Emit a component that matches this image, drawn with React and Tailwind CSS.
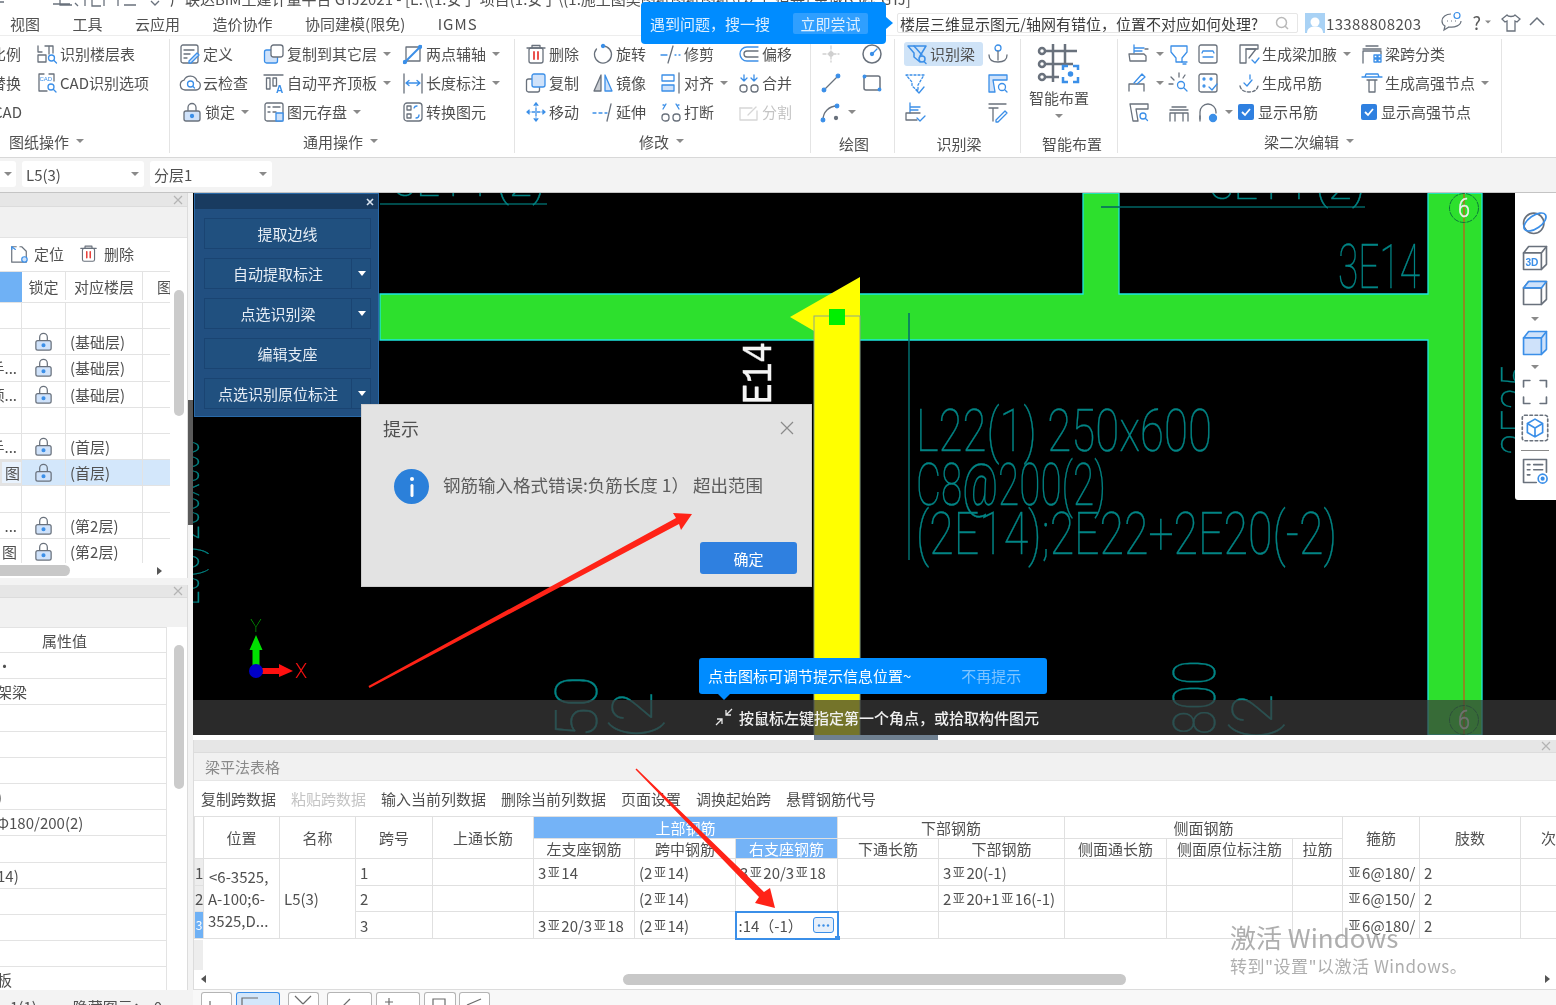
import React from 'react';

const G = '#69717c';
const B = '#3b8fe8';
const L = '#cfe2fa';

const ICONS = {
  layerTable: <><path d="M2 3v6h4M9 3h8v7M2 12h8v7H2zM13 3v8" /><circle cx="15.5" cy="15" r="3" stroke={B} /><path d="M18 17.5l2.5 2.5" stroke={B} /></>,
  cadOpt: <><path d="M8 2H3v17h8" /><path d="M13 2h5v7" /><text x="3.5" y="9" fontSize="6" fill={B} stroke="none" fontFamily="Liberation Sans">CAD</text><circle cx="15" cy="15" r="3" stroke={B} /><path d="M17.5 17.5l2.5 2.5" stroke={B} /></>,
  define: <><rect x="2" y="2" width="17" height="18" rx="2" /><path d="M5 7h10M5 11h6M5 15h3" /><path d="M10 18l8-8 2 2-8 8h-2z" stroke={B} fill={L} /></>,
  copyLayer: <><rect x="1.5" y="7" width="13" height="13" rx="2" stroke={B} fill={L} /><rect x="8" y="2" width="12" height="12" rx="2.5" fill="#fff" /></>,
  axis2: <><path d="M4 4h14v14H4z" /><path d="M2 20L19 3" stroke={B} strokeWidth="2" /><circle cx="3" cy="19" r="1.5" fill={B} stroke={B} /><circle cx="18" cy="4" r="1.5" fill={B} stroke={B} /></>,
  cloud: <><path d="M6 18a5 5 0 01-1-9.8A7 7 0 0118 9a4.6 4.6 0 01-1 9z" /><circle cx="11.5" cy="12" r="3" stroke={B} /><path d="M14 14.500l1.500 1.500" stroke={B} /></>,
  flatTop: <><path d="M1 3h19" /><rect x="3.500" y="6" width="3.500" height="11" /><rect x="10" y="6" width="3.500" height="8" /><text x="13" y="21" fontSize="10" fontWeight="700" fill={B} stroke="none" fontFamily="Liberation Sans">A</text></>,
  dim: <><path d="M2 2v19M20 2v19" /><path d="M4 11h14M4 11l3-2.500M4 11l3 2.500M18 11l-3-2.500M18 11l-3 2.500" stroke={B} /></>,
  lock: <><path d="M7 10V6.500a4 4 0 018 0V10" /><rect x="3" y="10" width="16" height="10" rx="2" fill={L} /><circle cx="11" cy="15" r="1.500" fill={B} stroke={B} /></>,
  save: <><rect x="2" y="2" width="18" height="18" rx="2" /><path d="M5 6h2M10 6h7M5 11h2M10 11h3" /><rect x="13" y="12" width="7" height="8" stroke={B} fill={L} /></>,
  convert: <><rect x="2" y="2" width="18" height="18" rx="3" /><rect x="5" y="5" width="4" height="4" /><rect x="5" y="13" width="4" height="4" /><path d="M12 7a3 3 0 013-2M17 14a3 3 0 01-3 3" stroke={B} /></>,
  trash: <><path d="M2 5h18M7 5V2.500h8V5" /><rect x="4" y="5" width="14" height="15" rx="2" /><path d="M9 9v7M13 9v7" stroke="#e8413c" strokeWidth="1.800" /></>,
  rotate: <><path d="M11 3a8.500 8.500 0 11-6.500 3" /><circle cx="11" cy="3" r="1.500" fill={B} stroke={B} /></>,
  trim: <><path d="M1 12h6" stroke={B} /><path d="M13 3L8 20" /><path d="M15 12h1M19 12h1" stroke={B} /></>,
  offset: <><path d="M20 4H9a7 7 0 000 14h11" stroke={B} /><path d="M20 8H9a3 3 0 000 6h11" /></>,
  copy: <><rect x="1.500" y="7" width="13" height="13" rx="2" /><rect x="7" y="2" width="13" height="13" rx="2" stroke={B} fill={L} /></>,
  mirror: <><path d="M9 3L2 19h7z" fill="#c9cdd3" /><path d="M13 3l7 16h-7z" fill={L} stroke={B} /></>,
  alignObj: <><rect x="2" y="3" width="12" height="6" stroke={B} /><rect x="2" y="13" width="12" height="6" stroke={B} fill={L} /><path d="M19 1v20" /></>,
  merge: <><rect x="2" y="13" width="7" height="7" rx="3" /><rect x="13" y="13" width="7" height="7" rx="3" /><path d="M6 3v6M16 3v6M3 6l3 3 3-3M13 6l3 3 3-3" stroke={B} /></>,
  move: <><path d="M11 2v18M2 11h18M11 2L8.500 5M11 2l2.500 3M11 20l-2.500-3M11 20l2.500-3M2 11l3-2.500M2 11l3 2.500M20 11l-3-2.500M20 11l-3 2.500" stroke={B} strokeDasharray="3 2" /></>,
  extend: <><path d="M1 12h3M7 12h3" stroke={B} /><path d="M19 3l-4 17" /><path d="M13 12h2" stroke={B} /></>,
  breakIcon: <><rect x="2" y="13" width="7" height="7" rx="3" /><rect x="13" y="13" width="7" height="7" rx="3" /><path d="M3 8l3-5M19 8l-3-5M3 4h1M19 4h-1" stroke={B} /></>,
  split: <g stroke="#d6d6d6"><path d="M2 7v12h17V10" /><path d="M2 7h12" /><path d="M10 14l8-8" /></g>,
  point: <g stroke="#cfcfcf"><path d="M11 3v16M3 11h16" strokeDasharray="3 2" /><circle cx="11" cy="11" r="2" fill="#cfcfcf" /></g>,
  circle: <><circle cx="11" cy="11" r="9" strokeWidth="1.500" /><circle cx="11" cy="11" r="1.500" fill={B} stroke={B} /><path d="M11 11l5-5" stroke={B} /></>,
  line: <><path d="M4 18L18 4" /><circle cx="4" cy="18" r="1.800" fill={B} stroke={B} /><circle cx="18" cy="4" r="1.800" fill={B} stroke={B} /></>,
  rect: <><rect x="3" y="4" width="16" height="14" rx="2" strokeWidth="1.500" /><circle cx="3.500" cy="4.500" r="1.300" fill={B} stroke={B} /><circle cx="18.500" cy="17.500" r="1.300" fill={B} stroke={B} /></>,
  arc: <><path d="M3 19C3 11 9 5 17 5" /><circle cx="3" cy="19" r="1.800" fill={B} stroke={B} /><circle cx="17" cy="5" r="1.800" fill={B} stroke={B} /><circle cx="16" cy="17" r="1.500" fill={G} /></>,
  beamId: <g stroke={B} strokeWidth="1.500"><path d="M2 3h18L14 13v6L8 14V10z" /><path d="M8 3l8 9" /><circle cx="16" cy="16" r="3" fill="#cfe3f7" /><path d="M18 18.500l2 2" /></g>,
  crown: <><circle cx="11" cy="5" r="3" stroke={B} /><path d="M11 8v9M2 12c0 5 3 7 9 7s9-2 9-7" stroke={G} /></>,
  beamSel: <g stroke={B}><path d="M2 3h18L14 13v6L8 14V10z" strokeDasharray="2 2" /><path d="M12 18l3 3 5-6" stroke={B} /></g>,
  beamFind: <><path d="M2 3h18v5H6l2 12H2z" stroke={B} fill={L} /><circle cx="15" cy="15" r="3.500" stroke={B} fill="#fff" /><path d="M18 18l2 2" stroke={B} /></>,
  stepCheck: <><path d="M6 2v10M6 6h10M6 9h8" stroke={B} /><path d="M2 12h14M2 12v7h11" /><path d="M13 17l3 3 5-5" stroke={B} /></>,
  tPen: <><path d="M2 3h17M2 7h9M6 7v13" /><path d="M9 19l9-9 2 2-9 9H9z" stroke={B} /></>,
  ring: <><circle cx="10" cy="12" r="8" stroke={G} /><ellipse cx="11" cy="11" rx="10" ry="5" transform="rotate(-35 11 11)" stroke={B} strokeWidth="1.300" /></>,
  cube3d: <><path d="M2 7l4-5h14v14l-4 4H2z" /><path d="M2 7h14v13M16 7l4-5" /><text x="3.500" y="17.500" fontSize="8" fontWeight="700" fill={B} stroke="none" fontFamily="Liberation Sans">3D</text></>,
  cube: <><path d="M2 7l4-5h14v14l-4 4H2z" /><path d="M2 7h14v13" /><path d="M2 7l4-5h14l-4 5z" fill={L} stroke={B} /></>,
  cubeBlue: <g stroke={B} strokeWidth="1.300"><path d="M2 7l4-5h14v14l-4 4H2z" fill={L} /><path d="M2 7h14v13M16 7l4-5" /></g>,
  corners: <path d="M2 7V2h5M15 2h5v5M20 15v5h-5M7 20H2v-5" />,
  cubeDash: <><rect x="1" y="1" width="20" height="20" rx="2" strokeDasharray="2 2" /><path d="M11 4l6 3.500v7L11 18l-6-3.500v-7zM5 7.500l6 3.500 6-3.500M11 11v7" stroke={B} /></>,
  listEye: <><path d="M20 12V2H2v18h10" /><path d="M5 6h2M10 6h7M5 10h2M10 10h7M5 14h2" /><circle cx="17" cy="17" r="3.500" stroke={B} /><circle cx="17" cy="17" r="1" fill={B} stroke={B} /></>,
  locate: <><path d="M8 3H3v17h16V8l-5-5h-2" /><path d="M3 3l4 3M3 3v3" stroke={B} /><circle cx="17" cy="17" r="3" fill={L} stroke={B} /></>,
  step: <><path d="M6 2v8M6 5h10M6 8h8" stroke={B} /><path d="M1 11h15l2 2v5H2z" /><path d="M17 6h3" /></>,
  funnelT: <><path d="M3 3h16v6l-5 6v4H8v-4L3 9z" stroke={B} /><path d="M14 19h5M15 21h3" stroke={B} /></>,
  box: <><rect x="2" y="2" width="18" height="18" rx="2" /><path d="M6 8h10l1 2M6 14h10M5 10l1-2" stroke={B} /></>,
  pencilBeam: <><path d="M1 19V12h15M16 12v7" /><path d="M6 11l8-9 3 3-8 7" stroke={B} /></>,
  sparkFind: <><path d="M11 1v4M3 5l3 3M17 3l-2 3M1 12h4" /><circle cx="13" cy="13" r="3.500" stroke={B} /><path d="M16 16l3 3" stroke={B} /></>,
  dots: <><rect x="2" y="2" width="18" height="18" rx="2" /><circle cx="7" cy="7" r="1" stroke={B} /><circle cx="14" cy="7" r="1" stroke={B} /><circle cx="7" cy="14" r="1" stroke={B} /><path d="M12 15l3 3 5-6" stroke={B} /></>,
  funnelFind: <><path d="M2 3h18v5H8l2 12H5z" /><circle cx="15" cy="15" r="3" stroke={B} /><path d="M17.500 17.500l2 2" stroke={B} /></>,
  beamTop: <><path d="M2 20v-8h18v8M7 12v8M15 12v8M4 6h14M2 9h18" /></>,
  arch: <><path d="M3 20v-9a8 8 0 0116 0v1" /><path d="M3 15v3" /><circle cx="16" cy="17" r="3.500" fill={B} stroke={B} /></>,
  haunch: <><path d="M2 2h18v4H8v14H2z" /><path d="M8 6l10 0-7 9" /><path d="M14 17l3 3 4-5" stroke={B} /></>,
  beamSpan: <><path d="M2 20V8h18v3M5 3h12M2 6h18" /><path d="M13 12h3v3h-3zM17 12h3v3h-3zM13 16h3v3h-3zM17 16h3v3h-3z" stroke={B} /></>,
  genHang: <><path d="M2 14c1 4 4 6 9 6s8-2 9-6" strokeDasharray="3 2" /><path d="M6 11l3 3 5-6M12 3v4" stroke={B} /></>,
  genNode: <><path d="M1 5h20M4 5l1-3h12l1 3" stroke={B} /><path d="M6 8h10M8 8v12h6V8" /></>,
};

function Icon({ n, s = 22, className = '' }) {
  return (
    <svg width={s} height={s} viewBox="0 0 22 22" fill="none" stroke={G} strokeWidth="1.300" strokeLinecap="round" strokeLinejoin="round" className={`shrink-0 ${className}`}>
      {ICONS[n]}
    </svg>
  );
}

function Caret({ className = 'ml-[6px]' }) {
  return <span className={`inline-block h-0 w-0 shrink-0 border-x-[4px] border-t-[4px] border-x-transparent border-t-[#8a8a8a] ${className}`} />;
}

function Item({ i, t, c, dim, className = '' }) {
  return (
    <div className={`flex h-[29px] items-center whitespace-nowrap ${className}`}>
      {i && <Icon n={i} />}
      {t && <span className={`ml-[2px] text-[15px] leading-none ${dim ? 'text-[#c4c4c4]' : 'text-[#505050]'}`}>{t}</span>}
      {c && <Caret />}
    </div>
  );
}

function Check({ t }) {
  return (
    <div className="flex h-[29px] items-center whitespace-nowrap">
      <span className="flex h-[16px] w-[16px] items-center justify-center rounded-[2px] bg-[#2f80e0]">
        <svg width="12" height="12" viewBox="0 0 12 12" fill="none" stroke="#fff" strokeWidth="1.800"><path d="M2 6l3 3 5-6" /></svg>
      </span>
      <span className="ml-[4px] text-[15px] leading-none text-[#505050]">{t}</span>
    </div>
  );
}

function GroupLabel({ t, c, className = 'pt-[4px]' }) {
  return (
    <div className={`flex h-[26px] items-center justify-center text-[15px] leading-none text-[#505050] ${className}`}>
      {t}
      {c && <Caret className="ml-[7px]" />}
    </div>
  );
}

function Group({ w, children, label, c, lc, last }) {
  return (
    <div className={`flex h-[114px] shrink-0 flex-col ${last ? '' : 'border-r border-[#e4e4e4]'}`} style={{ width: w }}>
      <div className="h-[87px]">{children}</div>
      {label && <GroupLabel t={label} c={c} className={lc} />}
    </div>
  );
}

function Ribbon() {
  return (
    <div className="flex h-[122px] border-b border-[#d8d8d8] bg-white pt-[3px]">
      <Group w={170} label="图纸操作" c lc="pt-[4px] pr-[76px]">
        <div className="grid grid-cols-[36px_1fr]">
          <div className="flex h-[29px] items-center justify-end overflow-hidden whitespace-nowrap pr-[15px] text-[15px] leading-none text-[#505050]">比例</div>
          <Item i="layerTable" t="识别楼层表" />
          <div className="flex h-[29px] items-center justify-end overflow-hidden whitespace-nowrap pr-[15px] text-[15px] leading-none text-[#505050]">替换</div>
          <Item i="cadOpt" t="CAD识别选项" />
          <div className="flex h-[29px] items-center justify-end overflow-hidden whitespace-nowrap pr-[14px] text-[15px] leading-none text-[#505050]">CAD</div>
        </div>
      </Group>
      <Group w={345} label="通用操作" c lc="pt-[4px] pr-[3px]">
        <div className="grid grid-cols-[84px_139px_1fr] pl-[9px]">
          <Item i="define" t="定义" />
          <Item i="copyLayer" t="复制到其它层" c />
          <Item i="axis2" t="两点辅轴" c />
          <Item i="cloud" t="云检查" />
          <Item i="flatTop" t="自动平齐顶板" c />
          <Item i="dim" t="长度标注" c />
          <Item i="lock" t="锁定" c className="pl-[2px]" />
          <Item i="save" t="图元存盘" c />
          <Item i="convert" t="转换图元" />
        </div>
      </Group>
      <Group w={296} label="修改" c lc="pt-[4px] pr-[2px]">
        <div className="grid grid-cols-[67px_68px_78px_1fr] pl-[10px]">
          <Item i="trash" t="删除" />
          <Item i="rotate" t="旋转" />
          <Item i="trim" t="修剪" />
          <Item i="offset" t="偏移" />
          <Item i="copy" t="复制" />
          <Item i="mirror" t="镜像" />
          <Item i="alignObj" t="对齐" c />
          <Item i="merge" t="合并" />
          <Item i="move" t="移动" />
          <Item i="extend" t="延伸" />
          <Item i="breakIcon" t="打断" />
          <Item i="split" t="分割" dim />
        </div>
      </Group>
      <Group w={84} label="绘图" lc="pt-[8px] pl-[3px]">
        <div className="grid grid-cols-[41px_1fr] pl-[9px]">
          <Item i="point" />
          <Item i="circle" />
          <Item i="line" />
          <Item i="rect" />
          <Item i="arc" c />
        </div>
      </Group>
      <Group w={126} label="识别梁" lc="pt-[8px] pl-[3px]">
        <div className="grid grid-cols-[92px_1fr] pl-[9px]">
          <div className="flex h-[29px] items-center">
            <div className="flex h-[24px] w-[79px] items-center rounded-[3px] bg-[#cfe3f7] pl-[2px]">
              <Icon n="beamId" />
              <span className="ml-[2px] text-[15px] leading-none text-[#505050]">识别梁</span>
            </div>
          </div>
          <Item i="crown" className="-ml-[9px]" />
          <Item i="beamSel" />
          <Item i="beamFind" className="-ml-[9px]" />
          <Item i="stepCheck" />
          <Item i="tPen" className="-ml-[9px]" />
        </div>
      </Group>
      <Group w={97} label="智能布置" lc="pt-[8px] pl-[6px]">
        <div className="flex flex-col items-center pr-[20px]">
          <svg width="44" height="44" viewBox="0 0 44 44" fill="none" stroke={G} strokeWidth="2.500" className="mt-[3px]">
            <circle cx="5" cy="9" r="3" /><circle cx="5" cy="22" r="3" /><circle cx="5" cy="35" r="3" />
            <path d="M8 9h32M8 22h28M8 35h14M16 2v38M28 2v20" />
            <path d="M26 28v-4h5M36 24h5v4M41 35v5h-5M31 40h-5v-5" stroke={B} />
            <circle cx="33.500" cy="32" r="1.500" fill={B} stroke={B} />
          </svg>
          <span className="mt-[4px] text-[15px] leading-none text-[#505050]">智能布置</span>
          <Caret className="mt-[9px]" />
        </div>
      </Group>
      <Group w={384} label="梁二次编辑" c lc="pt-[4px] pl-[1px] pr-[2px]">
        <div className="grid grid-cols-[40px_29px_41px_123px_1fr] pl-[10px]">
          <Item i="step" c />
          <Item i="funnelT" />
          <Item i="box" />
          <Item i="haunch" t="生成梁加腋" c />
          <Item i="beamSpan" t="梁跨分类" />
          <Item i="pencilBeam" c />
          <Item i="sparkFind" />
          <Item i="dots" />
          <Item i="genHang" t="生成吊筋" />
          <Item i="genNode" t="生成高强节点" c />
          <Item i="funnelFind" />
          <Item i="beamTop" />
          <Item i="arch" c />
          <Check t="显示吊筋" />
          <Check t="显示高强节点" />
        </div>
      </Group>
    </div>
  );
}

function TopBars() {
  return (
    <>
      <div className="flex h-[8px] overflow-hidden bg-white">
        <svg width="165" height="8" viewBox="0 0 165 8" fill="none" stroke={G} strokeWidth="1.300" className="shrink-0">
          <path d="M0 2h4M60 0v5h12M75 3l3 3M53 4h17M85 0v6M92 0v6h9M104 0v6M118 0v6M124 5h12M151 1l4 4 4-4" />
        </svg>
        <div className="ml-[5px] -mt-[9px] whitespace-nowrap text-[15px] leading-[16px] text-[#505050]">
          广联达BIM土建计量平台 GTJ2021 - [E:\(1.安于 项目(1.安于\(1.施工图类图纸图纸图纸\(安于 佰基) 金域B5栋.GTJ]
        </div>
      </div>
      <div className="flex h-[28px] border-b border-[#ededed] bg-white">
        <div className="flex h-[27px] w-[477px] shrink-0 items-center gap-[32.500px] whitespace-nowrap pl-[10px] pt-[4px] text-[15px] leading-none text-[#505050]">
          <span className="shrink-0">视图</span>
          <span className="shrink-0">工具</span>
          <span className="shrink-0">云应用</span>
          <span className="shrink-0">造价协作</span>
          <span className="shrink-0">协同建模(限免)</span>
          <span className="shrink-0 tracking-[1px]">IGMS</span>
        </div>
        <div className="ml-[420px] mt-[5px] flex h-[20px] w-[401px] shrink-0 items-center overflow-hidden rounded-[2px] border border-[#e6e6e6] pl-[2px] pr-[8px] text-[15px] leading-none text-[#3c3c3c]">
          <span className="flex-1 whitespace-nowrap">楼层三维显示图元/轴网有错位，位置不对应如何处理?</span>
          <svg width="14" height="14" viewBox="0 0 14 14" fill="none" stroke="#b9b9b9" strokeWidth="1.500"><circle cx="6.500" cy="6.500" r="5" /><path d="M10 10l3 3" /></svg>
        </div>
        <div className="ml-[7px] mt-[5px] flex h-[20px] items-center">
          <span className="flex h-[20px] w-[20px] items-end justify-center overflow-hidden bg-[#a9d2f5]">
            <svg width="18" height="18" viewBox="0 0 18 18" fill="#fff"><circle cx="9" cy="7" r="4.500" /><path d="M1 18c0-5 4-6.500 8-6.500s8 1.500 8 6.500z" /></svg>
          </span>
          <span className="ml-[1px] text-[15px] leading-none tracking-[0.350px] text-[#505050]">13388808203</span>
        </div>
        <div className="ml-[20px] mt-[3px] flex items-start gap-[7px]">
          <svg width="22" height="22" viewBox="0 0 22 22" fill="none" stroke={G} strokeWidth="1.200"><path d="M10 3C5 3 1 6 1 10c0 2 1 4 3 5l-1 4 5-3c6 1 12-2 12-6" /><path d="M6 10h.5M10 10h.5M14 10h.5" strokeWidth="2" /><circle cx="16" cy="4.500" r="3" stroke={B} /></svg>
          <span className="ml-[2px] flex h-[22px] items-center text-[18px] leading-none text-[#5a5a5a]">?<Caret className="ml-[3px] scale-75" /></span>
          <svg width="20" height="20" viewBox="0 0 20 20" fill="none" stroke={G} strokeWidth="1.300" className="ml-[2px] mt-[2px]"><path d="M6 2L1 6l3 3 2-1v10h8V8l2 1 3-3-5-4c-1 2-7 2-8 0z" /></svg>
          <svg width="18" height="18" viewBox="0 0 18 18" fill="none" stroke={G} strokeWidth="1.500" className="mt-[2px]"><path d="M2 12l7-7 7 7" /></svg>
        </div>
      </div>
      <Ribbon />
      <div className="flex h-[34px] items-center gap-[6px] bg-[#f3f3f3] pb-[2px]">
        <div className="flex h-[26px] w-[16px] items-center justify-end rounded-r-[3px] bg-white pr-[4px]"><Caret className="" /></div>
        <div className="flex h-[26px] w-[122px] items-center justify-between rounded-[3px] bg-white px-[4px] pr-[5px] text-[15px] leading-none text-[#505050]">L5(3)<Caret className="" /></div>
        <div className="flex h-[26px] w-[122px] items-center justify-between rounded-[3px] bg-white px-[4px] pr-[5px] text-[15px] leading-none text-[#505050]">分层1<Caret className="" /></div>
      </div>
    </>
  );
}

function PanelHead({ h, strip }) {
  return (
    <>
      <div className="flex items-center justify-end border-b border-[#dcdcdc] bg-[#e6e6e6] pr-[4px]" style={{ height: h }}>
        <svg width="10" height="10" viewBox="0 0 10 10" stroke="#b4b4b4" strokeWidth="1.200"><path d="M1 1l8 8M9 1l-8 8" /></svg>
      </div>
      <div className="bg-[#f1f1f1]" style={{ height: strip }} />
    </>
  );
}

const DRAW = [
  { n: '', l: false, f: '' },
  { n: '', l: true, f: '(基础层)' },
  { n: '手...', l: true, f: '(基础层)' },
  { n: '顶...', l: true, f: '(基础层)' },
  { n: '', l: false, f: '' },
  { n: '手...', l: true, f: '(首层)' },
  { n: '图', l: true, f: '(首层)', sel: true },
  { n: '', l: false, f: '' },
  { n: '...', l: true, f: '(第2层)' },
  { n: '图', l: true, f: '(第2层)' },
];

function DrawingPanel() {
  return (
    <div className="flex h-[385px] flex-col border-r border-[#dcdcdc] bg-white">
      <PanelHead h={14} strip={30} />
      <div className="flex h-[34px] items-center border-t border-[#e3e3e3] pb-[2px] pl-[9px] text-[15px] leading-none text-[#505050]">
        <Icon n="locate" s={20} /><span className="ml-[5px]">定位</span>
        <span className="ml-[15px]"><Icon n="trash" s={19} /></span><span className="ml-[6px]">删除</span>
      </div>
      <div className="flex flex-1 overflow-hidden">
        <div className="w-[170px] shrink-0">
          <div className="flex h-[32px] border-y border-[#e3e3e3] pb-[2px] text-[15px] leading-none text-[#505050]">
            <div className="-mb-[2px] w-[22px] bg-[#6fb1f5]" />
            <div className="flex w-[44px] items-center justify-center border-r border-[#e3e3e3]">锁定</div>
            <div className="flex w-[77px] items-center justify-center border-r border-[#e3e3e3]">对应楼层</div>
            <div className="flex flex-1 items-center overflow-hidden whitespace-nowrap pl-[14px]">图</div>
          </div>
          {DRAW.map((r, k) => (
            <div key={k} className={`flex h-[26.200px] border-b border-[#e3e3e3] text-[15px] leading-none text-[#505050] ${r.sel ? 'bg-[#d3e7fb]' : ''}`}>
              <div className={`flex w-[22px] items-center justify-end overflow-hidden whitespace-nowrap border-r border-[#e3e3e3] ${r.sel ? 'border-2 border-[#6c6c6c] bg-[#e8f2fd] pr-[1px]' : 'pr-[4px]'}`}>{r.n}</div>
              <div className="flex w-[44px] items-center justify-center border-r border-[#e3e3e3]">{r.l && <Icon n="lock" s={21} />}</div>
              <div className="flex w-[77px] items-center border-r border-[#e3e3e3] pl-[4px]">{r.f}</div>
            </div>
          ))}
        </div>
        <div className="ml-[4px] mt-[19px] h-[126px] w-[10px] rounded-full bg-[#cbcbcb]" />
      </div>
      <div className="flex h-[15px] items-center pr-[25px]">
        <div className="h-[11px] w-[70px] rounded-r-full bg-[#c8c8c8]" />
        <span className="ml-auto h-0 w-0 border-y-[4px] border-l-[5px] border-y-transparent border-l-[#555]" />
      </div>
    </div>
  );
}

const PROPS = ['·', '架梁', '', '', '', ')', 'Φ180/200(2)', '', '14)', '', '', '', '板'];

function PropPanel() {
  return (
    <div className="flex h-[405px] flex-col border-r border-[#dcdcdc] bg-white">
      <PanelHead h={13} strip={29} />
      <div className="flex flex-1 overflow-hidden">
        <div className="w-[167px] shrink-0 border-r border-[#e3e3e3]">
          <div className="flex h-[26px] items-center border-y border-[#e3e3e3] pl-[42px] text-[15px] leading-none text-[#505050]">属性值</div>
          {PROPS.map((p, k) => (
            <div key={k} className="flex h-[26.200px] items-center overflow-hidden whitespace-nowrap border-b border-[#e3e3e3] text-[15px] leading-none text-[#505050]">
              <span className="-ml-[3px]">{p}</span>
            </div>
          ))}
        </div>
        <div className="ml-[7px] mt-[18px] h-[144px] w-[10px] rounded-full bg-[#cbcbcb]" />
      </div>
    </div>
  );
}

function LeftColumn() {
  return (
    <div className="flex w-[188px] shrink-0 flex-col bg-[#f3f3f3]">
      <DrawingPanel />
      <div className="h-[7px] bg-[#f3f3f3]" />
      <PropPanel />
      <div className="flex h-[15px] overflow-hidden pl-[10px] pt-[9px] text-[15px] leading-none text-[#505050]">
        <span>1(1)</span><span className="ml-[36px]">隐藏图元：</span><span className="ml-[6px]">0</span>
      </div>
    </div>
  );
}

const CAD = '#028585';

function CadText({ x, y, w, s = 60, children, fill = CAD, rot, family = "'Roboto', sans-serif", weight = 100 }) {
  const transform = rot ? `translate(${x},${y}) rotate(-90)` : undefined;
  return (
    <text x={rot ? 0 : x} y={rot ? 0 : y} transform={transform} fontSize={s} fill={fill} stroke={fill} strokeWidth="0.400" fontFamily={family} fontWeight={weight} textLength={w} lengthAdjust="spacingAndGlyphs">
      {children}
    </text>
  );
}

function CadDrawing() {
  return (
    <svg width="1363" height="542" viewBox="193 193 1363 542" className="block">
      <rect x="193" y="193" width="1363" height="542" fill="#000" />
      <path d="M380 294H1083V193H1119V294H1428V193H1482V735H1428V340H380Z" fill="#2de02d" stroke="#1ee6e0" strokeWidth="1.300" />
      <path d="M1464 193V735" stroke="#c9541c" strokeWidth="1.200" />
      <circle cx="1464" cy="208" r="14.500" fill="none" stroke="#0a7a3a" strokeDasharray="6 1" />
      <circle cx="1464" cy="720" r="14.500" fill="none" stroke="#0a7a3a" strokeDasharray="6 1" />
      <CadText x={1458} y={217} w={12} s={25} fill="#f0f0f0" weight={300}>6</CadText>
      <CadText x={1458} y={729} w={12} s={25} fill="#f0f0f0" weight={300}>6</CadText>
      <path d="M790 317L860 277V340H814V331Z" fill="#ffff00" />
      <rect x="814" y="316" width="46" height="425" fill="#ffff00" stroke="#8ea88a" />
      <rect x="829" y="309" width="16" height="16" fill="#00f000" />
      <path d="M909 313V560" stroke="#006e6e" strokeWidth="1.500" />
      <path d="M380 204H547M1101 207H1365" stroke="#006464" strokeWidth="1.500" />
      <CadText x={393} y={196} w={152} s={40}>3E14 (2)</CadText>
      <CadText x={1210} y={199} w={155} s={40}>3E14 (2)</CadText>
      <CadText x={1338} y={288} w={82} s={62}>3E14</CadText>
      <CadText x={916} y={451} w={296}>L22(1) 250x600</CadText>
      <CadText x={916} y={505} w={190}>C8@200(2)</CadText>
      <CadText x={916} y={554} w={421}>(2E14);2E22+2E20(-2)</CadText>
      <CadText x={771} y={404} w={62} s={42} fill="#f5f5f5" rot family="'Liberation Mono', monospace" weight={400}>E14</CadText>
      <CadText x={1535} y={455} w={90} s={48} rot>2E25</CadText>
      <CadText x={1215} y={735} w={75} s={60} rot>800</CadText>
      <CadText x={1272} y={740} w={46} s={56} rot>(2</CadText>
      <CadText x={597} y={738} w={62} s={60} rot>50</CadText>
      <CadText x={652} y={738} w={46} s={56} rot>(2</CadText>
      <CadText x={199} y={605} w={165} s={42} rot>L5(3) 250x500</CadText>
      <path d="M252.500 670V650H249.500L256 635L262.500 650H259.500V670Z" fill="#00e000" />
      <text x="256" y="632" fontSize="19" textAnchor="middle" fill="#00d000" fontFamily="'Roboto', sans-serif" fontWeight="100">Y</text>
      <path d="M262 668H279V664L293 671L279 677V674H262Z" fill="#ff1010" />
      <circle cx="256" cy="671" r="7" fill="#0000c8" />
      <text x="301" y="678" fontSize="20" textAnchor="middle" fill="#f01010" fontFamily="'Roboto', sans-serif" fontWeight="300">X</text>
    </svg>
  );
}

function FloatBtn({ t, drop }) {
  return (
    <div className="mb-[9px] flex h-[31px] w-[167px] border border-[#1a4472] bg-[#20507f] text-[15px] leading-none text-[#e6edf5]">
      <div className="flex flex-1 items-center justify-center">{t}</div>
      {drop && (
        <div className="flex w-[19px] items-center justify-center border-l border-[#1a4472] pl-[2px]">
          <span className="h-0 w-0 border-x-[4.500px] border-t-[5px] border-x-transparent border-t-white" />
        </div>
      )}
    </div>
  );
}

function FloatPanel() {
  return (
    <div className="absolute left-[1px] top-0 h-[224px] w-[185px] border border-[#2a6aa8] bg-[#214f80]">
      <div className="flex h-[15px] items-center justify-end bg-[#193b60] pr-[4px]">
        <svg width="8" height="8" viewBox="0 0 8 8" stroke="#d9e4f0" strokeWidth="1.600"><path d="M1 1l6 6M7 1L1 7" /></svg>
      </div>
      <div className="pl-[9px] pt-[9px]">
        <FloatBtn t="提取边线" />
        <FloatBtn t="自动提取标注" drop />
        <FloatBtn t="点选识别梁" drop />
        <FloatBtn t="编辑支座" />
        <FloatBtn t="点选识别原位标注" drop />
      </div>
    </div>
  );
}

function Dialog() {
  return (
    <div className="absolute left-[168px] top-[211px] flex h-[183px] w-[451px] flex-col border border-[#cfcfcf] bg-[#e3e3e3] pl-[21px] pr-[14px] pt-[13px]">
      <div className="flex items-center justify-between">
        <span className="text-[18px] leading-[20px] text-[#505050]">提示</span>
        <svg width="16" height="16" viewBox="0 0 16 16" stroke="#8a8a8a" strokeWidth="1.200" className="mr-[2px]"><path d="M2 2l12 12M14 2L2 14" /></svg>
      </div>
      <div className="ml-[11px] mt-[31px] flex items-center">
        <span className="flex h-[35px] w-[35px] shrink-0 items-center justify-center rounded-full bg-[#2b80da]">
          <svg width="8" height="22" viewBox="0 0 8 22" fill="#fff"><circle cx="4" cy="3" r="2" /><rect x="2.500" y="8" width="3" height="13" rx="1.500" /></svg>
        </span>
        <span className="ml-[14px] -mt-[3px] whitespace-nowrap text-[17.500px] leading-none text-[#5c5c5c]">钢筋输入格式错误:负筋长度 1） 超出范围</span>
      </div>
      <div className="mt-[38px] flex justify-end">
        <div className="flex h-[32px] w-[97px] items-center justify-center rounded-[3px] bg-[#2f80e0] text-[15px] leading-none text-white">确定</div>
      </div>
    </div>
  );
}

function SideTools() {
  return (
    <div className="absolute right-0 top-0 flex h-[307px] w-[41px] flex-col items-center rounded-bl-[3px] bg-white pr-[2px] pt-[15px]">
      <Icon n="ring" s={28} />
      <Icon n="cube3d" s={28} className="mt-[8px]" />
      <Icon n="cube" s={28} className="mt-[7px]" />
      <Caret className="mt-[10px]" />
      <Icon n="cubeBlue" s={28} className="mt-[8px]" />
      <Caret className="mt-[8px]" />
      <Icon n="corners" s={28} className="mt-[9px]" />
      <Icon n="cubeDash" s={28} className="mt-[8px]" />
      <div className="mt-[8px] h-px w-[28px] bg-[#8a8a8a]" />
      <Icon n="listEye" s={28} className="mt-[6px]" />
    </div>
  );
}

function Canvas() {
  return (
    <div className="relative h-[542px] overflow-hidden bg-black">
      <CadDrawing />
      <div className="absolute inset-x-0 bottom-0 flex h-[35px] items-center bg-[#3b3b3b]/[0.71] pb-[1px] pl-[521px]">
        <svg width="20" height="20" viewBox="0 0 20 20" fill="none" stroke="#e8e8e8" strokeWidth="1.300"><path d="M12 8l6-6M12 3v5h5M8 12l-6 6M3 12h5v5" /></svg>
        <span className="ml-[5px] text-[15px] font-medium leading-none text-[#f0f0f0]">按鼠标左键指定第一个角点，或拾取构件图元</span>
      </div>
      <FloatPanel />
      <Dialog />
      <SideTools />
      <div className="absolute left-[506px] top-[465px] flex h-[36px] w-[348px] items-center rounded-[3px] bg-[#008cff] pb-[1px] pl-[9px] text-[15px] leading-none text-white">
        <span>点击图标可调节提示信息位置~</span>
        <span className="ml-[50px] text-[#7fc4ff]">不再提示</span>
        <span className="absolute left-[19px] top-[36px] h-0 w-0 border-x-[6px] border-t-[6px] border-x-transparent border-t-[#008cff]" />
      </div>
    </div>
  );
}

function R() {
  return <span className="relative -top-[2px] mx-[1.500px] text-[12px]">亚</span>;
}

const cellB = 'border border-[#e0e0e0]';

function Th({ children, className = '', ...rest }) {
  return <th className={`${cellB} p-0 text-center text-[15px] font-normal leading-none text-[#505050] ${className}`} {...rest}>{children}</th>;
}

function Td({ children, className = '', ...rest }) {
  return <td className={`${cellB} overflow-hidden whitespace-nowrap p-0 pl-[4px] text-[15px] leading-none text-[#505050] ${className}`} {...rest}>{children}</td>;
}

const COLS = [9, 76, 76, 77, 101, 101, 101, 102, 101, 126, 102, 126, 50, 77, 101, 37];

function BeamTable() {
  return (
    <table className="w-[1363px] table-fixed border-collapse">
      <colgroup>
        {COLS.map((w, k) => <col key={k} style={{ width: w }} />)}
      </colgroup>
      <thead>
        <tr className="h-[22px]">
          <Th rowSpan={2} />
          <Th rowSpan={2}>位置</Th>
          <Th rowSpan={2}>名称</Th>
          <Th rowSpan={2}>跨号</Th>
          <Th rowSpan={2}>上通长筋</Th>
          <Th colSpan={3} className="bg-[#74b3f7] !text-white">上部钢筋</Th>
          <Th colSpan={2}>下部钢筋</Th>
          <Th colSpan={3}>侧面钢筋</Th>
          <Th rowSpan={2}>箍筋</Th>
          <Th rowSpan={2}>肢数</Th>
          <Th rowSpan={2} className="text-left pl-[20px]">次</Th>
        </tr>
        <tr className="h-[20px]">
          <Th>左支座钢筋</Th>
          <Th>跨中钢筋</Th>
          <Th className="bg-[#74b3f7] !text-white">右支座钢筋</Th>
          <Th>下通长筋</Th>
          <Th>下部钢筋</Th>
          <Th>侧面通长筋</Th>
          <Th>侧面原位标注筋</Th>
          <Th>拉筋</Th>
        </tr>
      </thead>
      <tbody>
        <tr className="h-[27px]">
          <td className={`${cellB} bg-[#ededed] p-0 text-center text-[15px] leading-none text-[#505050]`}>1</td>
          <td rowSpan={3} className={`${cellB} p-0 pl-[4px] align-middle text-[15px] leading-[22px] text-[#505050]`}>
            <div className="whitespace-nowrap pl-[1px]">&lt;6-3525,</div>
            <div className="whitespace-nowrap">A-100;6-</div>
            <div className="whitespace-nowrap">3525,D...</div>
          </td>
          <Td rowSpan={3}>L5(3)</Td>
          <Td>1</Td>
          <Td />
          <Td>3<R />14</Td>
          <Td>(2<R />14)</Td>
          <Td>3<R />20/3<R />18</Td>
          <Td />
          <Td>3<R />20(-1)</Td>
          <Td /><Td /><Td />
          <Td><R />6@180/</Td>
          <Td>2</Td>
          <Td />
        </tr>
        <tr className="h-[26px]">
          <td className={`${cellB} bg-[#ededed] p-0 text-center text-[15px] leading-none text-[#505050]`}>2</td>
          <Td>2</Td>
          <Td />
          <Td />
          <Td>(2<R />14)</Td>
          <Td />
          <Td />
          <Td>2<R />20+1<R />16(-1)</Td>
          <Td /><Td /><Td />
          <Td><R />6@150/</Td>
          <Td>2</Td>
          <Td />
        </tr>
        <tr className="h-[27px]">
          <td className={`${cellB} bg-[#6fb1f5] p-0 text-center text-[12px] leading-none text-white`}>3</td>
          <Td>3</Td>
          <Td />
          <Td>3<R />20/3<R />18</Td>
          <Td>(2<R />14)</Td>
          <td className="relative border-2 border-[#3b8fe8] p-0 pl-[2px] text-[15px] leading-none text-[#505050]">
            <div className="flex items-center justify-between pr-[3px]">
              <span>:14（-1）</span>
              <span className="flex h-[16px] w-[21px] items-center justify-center rounded-[3px] border border-[#3b8fe8] bg-[#e6effa]">
                <svg width="13" height="3" viewBox="0 0 13 3" fill="#3b8fe8"><circle cx="2" cy="1.500" r="1.200" /><circle cx="6.500" cy="1.500" r="1.200" /><circle cx="11" cy="1.500" r="1.200" /></svg>
              </span>
            </div>
            <span className="absolute -bottom-[3px] -right-[3px] h-[5px] w-[5px] bg-[#3b8fe8]" />
          </td>
          <Td />
          <Td /><Td /><Td /><Td />
          <Td><R />6@180/</Td>
          <Td>2</Td>
          <Td />
        </tr>
      </tbody>
    </table>
  );
}

function TablePanel() {
  return (
    <div className="flex h-[250px] flex-col border-b border-l border-[#dcdcdc] bg-white">
      <div className="flex h-[13px] items-center justify-end border-b border-[#dcdcdc] bg-[#e6e6e6] pr-[5px]">
        <svg width="10" height="10" viewBox="0 0 10 10" stroke="#b4b4b4" strokeWidth="1.200"><path d="M1 1l8 8M9 1L1 9" /></svg>
      </div>
      <div className="flex h-[28px] items-center border-b border-[#e6e6e6] bg-[#f1f1f1] pl-[11px] text-[15px] leading-none text-[#8a8a8a]">梁平法表格</div>
      <div className="flex h-[35px] items-center gap-[15px] pl-[7px] text-[15px] leading-none text-[#505050]">
        <span>复制跨数据</span>
        <span className="text-[#c4c4c4]">粘贴跨数据</span>
        <span>输入当前列数据</span>
        <span>删除当前列数据</span>
        <span>页面设置</span>
        <span>调换起始跨</span>
        <span>悬臂钢筋代号</span>
      </div>
      <div className="overflow-hidden">
        <BeamTable />
      </div>
      <div className="h-[30px] w-[9px] bg-[#ededed]" />
      <div className="flex flex-1 items-center pl-[7px] pr-[6px]">
        <span className="h-0 w-0 border-y-[4px] border-r-[5px] border-y-transparent border-r-[#555]" />
        <div className="ml-[417px] h-[11px] w-[503px] rounded-full bg-[#c8c8c8]" />
        <span className="ml-auto h-0 w-0 border-y-[4px] border-l-[5px] border-y-transparent border-l-[#555]" />
      </div>
    </div>
  );
}

function BottomTabs() {
  const tabs = [
    { w: 31, ml: 8, d: 'M8 14v-6' },
    { w: 44, ml: 4, d: 'M5 12V5h16', on: true },
    { w: 31, ml: 8, d: 'M6 3l8 8M22 3l-8 8' },
    { w: 45, ml: 8, d: 'M14 14l8-8' },
    { w: 44, ml: 4, d: 'M8 9h8M12 5v8' },
    { w: 32, ml: 4, d: 'M8 6h12v8H8z' },
    { w: 31, ml: 3, d: 'M7 12l14-6' },
  ];
  return (
    <div className="flex h-[15px] items-end overflow-hidden bg-[#f8f8f8]">
      {tabs.map((t, k) => (
        <span key={k} className={`block h-[13px] rounded-t-[3px] border border-b-0 ${t.on ? 'border-[#3b8fe8] bg-[#d3e7fb]' : 'border-[#b4b4b4] bg-white'}`} style={{ width: t.w, marginLeft: t.ml }}>
          <svg width={t.w - 2} height="13" fill="none" stroke="#6b6b6b" strokeWidth="1.200"><path d={t.d} /></svg>
        </span>
      ))}
    </div>
  );
}

function Overlays() {
  return (
    <>
      <div className="absolute left-[641px] top-[2px] flex h-[42px] w-[245px] items-center rounded-[4px] bg-[#008cff] pl-[9px] text-[15px] leading-none text-[#dff0ff]">
        <span>遇到问题，搜一搜</span>
        <span className="ml-[23px] flex h-[21px] w-[75px] items-center justify-center rounded-[2px] bg-[#2f9fff]">立即尝试</span>
        <span className="absolute -right-[7px] top-[15px] h-0 w-0 border-y-[6px] border-l-[7px] border-y-transparent border-l-[#008cff]" />
      </div>
      <div className="pointer-events-none absolute left-[1230px] top-[920px] text-[#8b8b8b]/70">
        <div className="text-[26px] leading-[34px]">激活 Windows</div>
        <div className="text-[17px] leading-[24px] tracking-[0.500px]">转到"设置"以激活 Windows。</div>
      </div>
      <svg width="1556" height="1005" viewBox="0 0 1556 1005" className="pointer-events-none absolute left-0 top-0">
        <path d="M368.500 686L676 518L673 513L692 514L681 530L679 524L369.500 688Z" fill="#ff2317" />
        <path d="M635.500 769.500L759 897L755 903L775 908L770 888L764 892L636.500 768.500Z" fill="#ff2317" />
      </svg>
    </>
  );
}

export default function App() {
  return (
    <div className="relative h-[1005px] w-[1556px] overflow-hidden bg-[#f3f3f3] font-['Noto_Sans_CJK_SC','Noto_Sans',sans-serif] blur-[0.4px]">
      <TopBars />
      <div className="h-px bg-[#c4c4c4]" />
      <div className="flex h-[812px]">
        <LeftColumn />
        <div className="flex w-[5px] shrink-0 items-center bg-[#f3f3f3]">
          <div className="-mt-[274px] h-[125px] w-full bg-[#5a5a5a]" />
        </div>
        <div className="flex min-w-0 flex-1 flex-col">
          <Canvas />
          <div className="flex h-[5px] bg-white">
            <div className="ml-[621px] h-full w-[124px] bg-[#6f8090]" />
          </div>
          <TablePanel />
          <BottomTabs />
        </div>
      </div>
      <Overlays />
    </div>
  );
}
